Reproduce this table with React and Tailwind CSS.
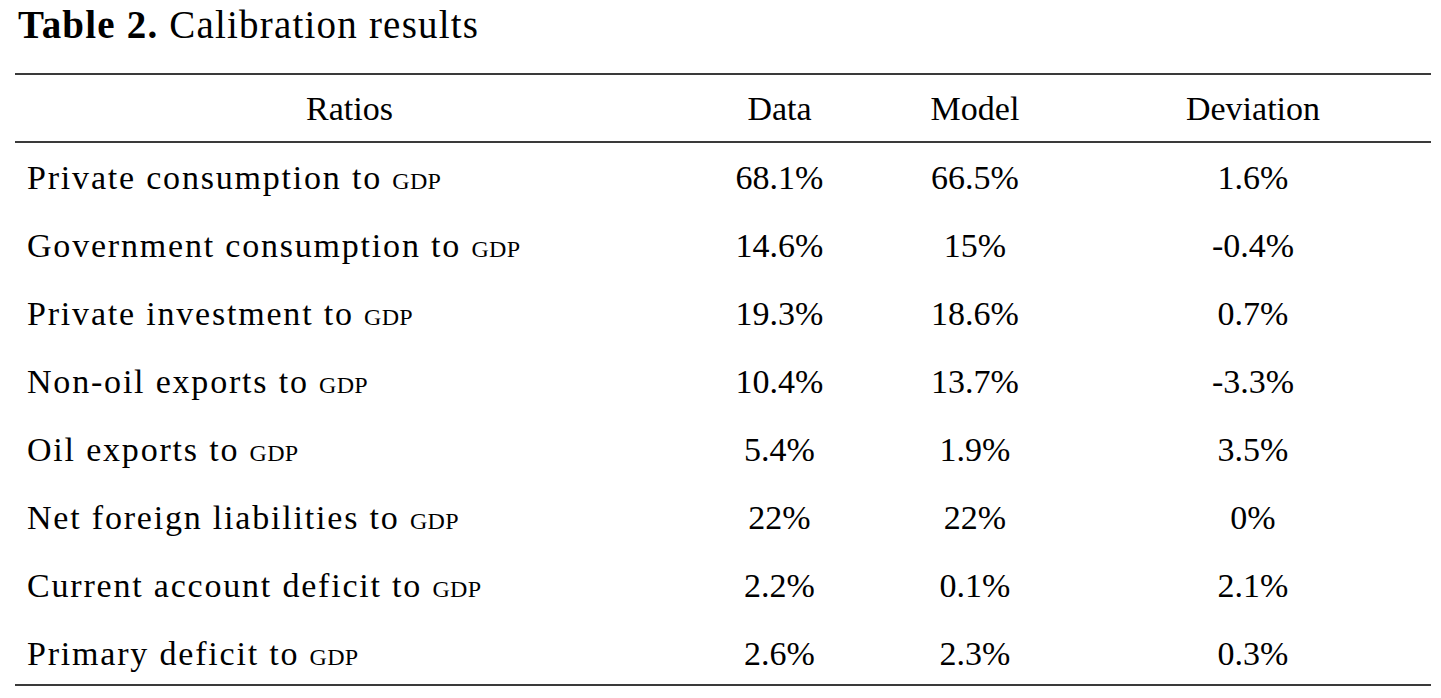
import React from 'react';

const rows = [
  ['Private consumption to', '68.1%', '66.5%', '1.6%'],
  ['Government consumption to', '14.6%', '15%', '-0.4%'],
  ['Private investment to', '19.3%', '18.6%', '0.7%'],
  ['Non-oil exports to', '10.4%', '13.7%', '-3.3%'],
  ['Oil exports to', '5.4%', '1.9%', '3.5%'],
  ['Net foreign liabilities to', '22%', '22%', '0%'],
  ['Current account deficit to', '2.2%', '0.1%', '2.1%'],
  ['Primary deficit to', '2.6%', '2.3%', '0.3%'],
];

const Rule = ({ className = '' }) => <div className={`h-[2px] bg-[#3a3a3a] ${className}`} />;

const App = () => {
  return (
    <div className="w-[1441px] h-[698px] bg-white text-black font-['Liberation_Serif',serif] overflow-hidden">
      <h1 className="pl-[18px] pt-[2px] h-[73px] text-[39px] leading-[46px] tracking-[1.2px]">
        <span className="font-bold">Table 2.</span> Calibration results
      </h1>
      <div className="ml-[15px] w-[1416px]">
        <Rule />
        <div className="grid grid-cols-[669px_191px_200px_356px] h-[66px] items-center text-[34px] text-center">
          <div>Ratios</div>
          <div>Data</div>
          <div>Model</div>
          <div>Deviation</div>
        </div>
        <Rule />
        {rows.map(([label, data, model, dev]) => (
          <div
            key={label}
            className="grid grid-cols-[669px_191px_200px_356px] h-[68px] items-center text-[34px] text-center"
          >
            <div className="text-left pl-[12px] tracking-[1.8px]">
              {label} <span className="[font-variant:small-caps] tracking-[0.3px]">gdp</span>
            </div>
            <div>{data}</div>
            <div>{model}</div>
            <div>{dev}</div>
          </div>
        ))}
        <Rule className="-mt-[3px]" />
      </div>
    </div>
  );
};

export default App;
